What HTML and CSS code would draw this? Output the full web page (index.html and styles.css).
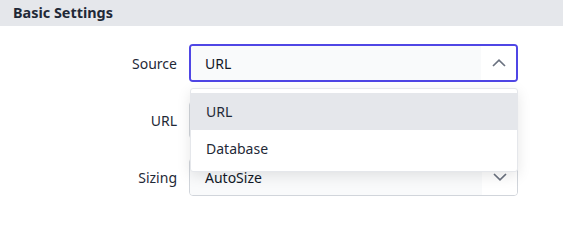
FILE: index.html
```html
<!DOCTYPE html>
<html>
<head>
<meta charset="utf-8">
<link rel="stylesheet" href="styles.css">
</head>
<body>
<div class="section-header">Basic Settings</div>
<div class="form">
  <label class="label">Source</label>
  <div class="field">
    <div class="select select-open">
      <span class="value">URL</span>
      <span class="arrow">
        <svg width="14" height="8" viewBox="0 0 14 8"><path d="M1 7 L7 1.2 L13 7" fill="none" stroke="#6b7280" stroke-width="1.7"/></svg>
      </span>
    </div>
    <div class="menu">
      <div class="option active">URL</div>
      <div class="option">Database</div>
    </div>
  </div>

  <label class="label">URL</label>
  <div class="field">
    <div class="select"><span class="value"></span><span class="arrow"></span></div>
  </div>

  <label class="label">Sizing</label>
  <div class="field">
    <div class="select">
      <span class="value">AutoSize</span>
      <span class="arrow">
        <svg width="14" height="8" viewBox="0 0 14 8"><path d="M1 1 L7 6.8 L13 1" fill="none" stroke="#6b7280" stroke-width="1.7"/></svg>
      </span>
    </div>
  </div>
</div>
</body>
</html>
```
FILE: styles.css
```css
html, body {
  margin: 0;
  padding: 0;
  background: #ffffff;
  font-family: "Noto Sans", "Open Sans", sans-serif;
  color: #111827;
}
.section-header {
  height: 26px;
  line-height: 26px;
  background: #e5e7eb;
  padding-left: 13px;
  font-size: 14.4px;
  font-weight: 700;
  color: #1f2937;
}
.form {
  display: grid;
  grid-template-columns: 177px 329px;
  column-gap: 12px;
  row-gap: 19px;
  padding-top: 18px;
  align-items: center;
}
.label {
  text-align: right;
  font-size: 14px;
  color: #1f2937;
}
.field {
  position: relative;
}
.select {
  box-sizing: border-box;
  height: 38px;
  display: flex;
  align-items: stretch;
  border: 1px solid #d1d5db;
  border-radius: 4px;
  background: #ffffff;
  overflow: hidden;
}
.select-open {
  border: 2px solid #4f46e5;
}
.value {
  flex: 1;
  display: flex;
  align-items: center;
  padding-left: 15px;
  font-size: 14px;
  background: #f9fafb;
}
.select-open .value {
  padding-left: 14px;
}
.arrow {
  width: 35px;
  display: flex;
  align-items: center;
  justify-content: center;
  background: #ffffff;
}
.menu {
  position: absolute;
  top: 44px;
  left: 1px;
  right: 0;
  box-sizing: border-box;
  background: #ffffff;
  border: 1px solid #e5e7eb;
  border-radius: 3px;
  padding: 4px 0;
  box-shadow: 0 4px 14px rgba(0, 0, 0, 0.10);
  z-index: 2;
}
.option {
  height: 37px;
  line-height: 37px;
  padding-left: 15px;
  font-size: 14px;
  color: #1f2937;
}
.option.active {
  background: #e5e7eb;
}
```
